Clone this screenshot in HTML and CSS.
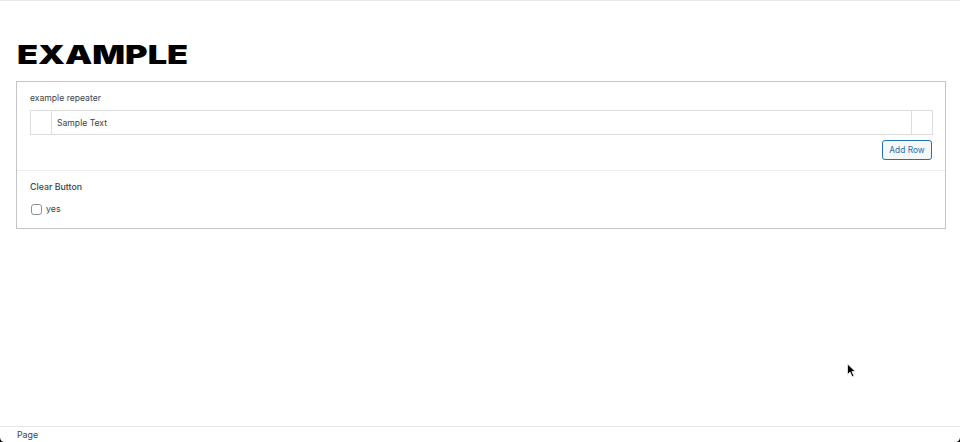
FILE: index.html
```html
<!DOCTYPE html>
<html lang="en">
<head>
<meta charset="utf-8">
<title>Example</title>
<link rel="stylesheet" href="styles.css">
</head>
<body>
<div class="window">
  <main class="content">
    <h1 class="title"><span class="title-text">EXAMPLE</span></h1>
    <section class="box">
      <div class="field field-repeater">
        <div class="label">example repeater</div>
        <div class="table">
          <div class="cell cell-handle"></div>
          <div class="cell cell-main">Sample Text</div>
          <div class="cell cell-remove"></div>
        </div>
        <div class="actions"><button class="button" type="button">Add Row</button></div>
      </div>
      <div class="field field-clear">
        <div class="label label-strong">Clear Button</div>
        <label class="check"><span class="checkbox"></span><span>yes</span></label>
      </div>
    </section>
  </main>
  <footer class="footer">Page</footer>
  <svg class="cursor" width="12" height="16" viewBox="0 0 12 16" aria-hidden="true"><path d="M1.5 1v10.5l2.6-2.4 2 4.6 1.8-.8-2-4.4h3.4z" fill="#000" stroke="#fff" stroke-width=".7"/></svg>
  <span class="corner corner-left"></span>
  <span class="corner corner-right"></span>
</div>
</body>
</html>
```
FILE: styles.css
```css
* { box-sizing: border-box; }
html, body { margin: 0; height: 100%; background: #fff; }
body { font-family: Inter, "Liberation Sans", sans-serif; color: #3c434a; overflow: hidden; }
.window { position: relative; width: 960px; height: 442px; display: flex; flex-direction: column; border-top: 1px solid #e8e8e4; overflow: hidden; }
.content { flex: 1; padding: 0 14px 0 16px; }
.title { margin: 0; padding-top: 37px; height: 80px; font-size: 26px; line-height: 34px; font-weight: 900; color: #000; }
.title-text { display: inline-block; transform: scaleX(1.32); transform-origin: left center; margin-left: 1px; }
.box { border: 1px solid #c3c4c7; height: 148px; }
.field { padding: 0 12px 0 13px; }
.field-repeater { height: 89px; padding-top: 10px; border-bottom: 1px solid #ececec; }
.field-clear { padding-top: 10px; }
.label { font-size: 8.6px; line-height: 12px; color: #3c434a; }
.label-strong { font-size: 8.8px; font-weight: 500; }
.table { display: flex; height: 25px; margin-top: 6px; border: 1px solid #dcdcde; }
.cell { font-size: 8.6px; line-height: 25px; color: #3c434a; }
.cell-handle { width: 21px; border-right: 1px solid #dcdcde; }
.cell-main { flex: 1; padding-left: 5px; }
.cell-remove { width: 21px; border-left: 1px solid #dcdcde; }
.actions { display: flex; justify-content: flex-end; margin-top: 5px; padding-right: 1px; }
.button { width: 50px; height: 20px; padding: 0; border: 1px solid #2271b1; border-radius: 3px; background: #f6f7f7; color: #2271b1; font: 8.4px/18px Inter, "Liberation Sans", sans-serif; }
.check { display: flex; align-items: center; gap: 4px; margin-top: 10px; margin-left: 1px; font-size: 8.8px; line-height: 12px; }
.checkbox { width: 11px; height: 11px; border: 1px solid #8c8f94; border-radius: 3px; background: #fff; }
.footer { height: 16px; border-top: 1px solid #e6e6e6; padding-left: 17px; font-size: 8.8px; line-height: 15px; color: #3c434a; }
.cursor { position: absolute; left: 846px; top: 362px; }
.corner { position: absolute; bottom: 0; width: 5px; height: 5px; background: #000; }
.corner-left { left: 0; clip-path: path("M0 0 Q0 5 5 5 L0 5 Z"); }
.corner-right { right: 0; clip-path: path("M5 0 Q5 5 0 5 L5 5 Z"); }
```
